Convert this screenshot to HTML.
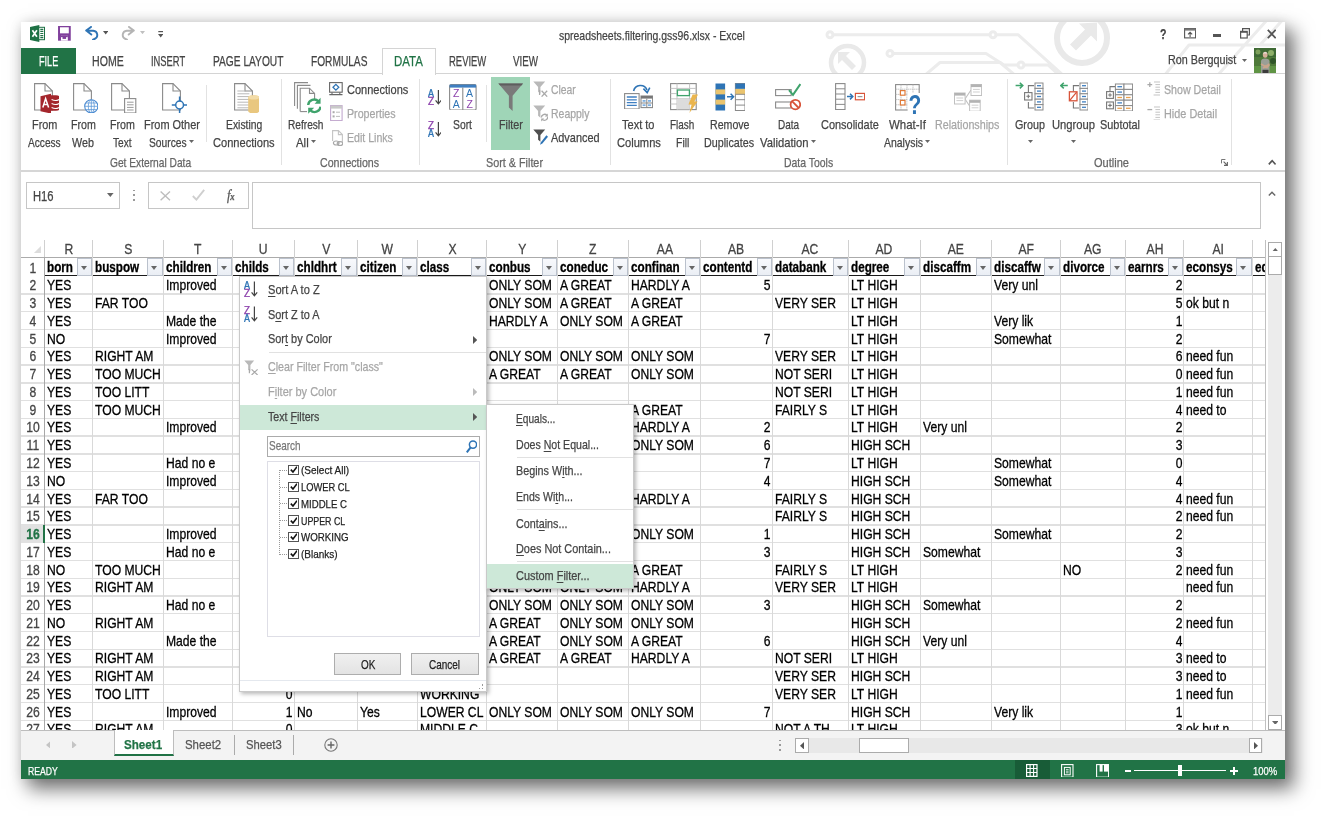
<!DOCTYPE html>
<html><head><meta charset="utf-8"><title>Excel</title>
<style>
*{box-sizing:border-box;margin:0;padding:0}
html,body{width:1326px;height:823px;overflow:hidden;background:#fff}
body{font-family:"Liberation Sans",sans-serif;font-size:13px;color:#444;position:relative}
.win{position:absolute;left:21px;top:22px;width:1264px;height:757px;background:#fff;box-shadow:8px 9px 18px 1px rgba(0,0,0,.55),0 0 12px rgba(0,0,0,.09)}
.pg{position:absolute;left:0;top:0;width:1326px;height:823px;will-change:transform}
.abs{position:absolute;display:block}
.t{position:absolute;white-space:nowrap;line-height:1;transform-origin:0 0;color:#444;font-size:13px;-webkit-text-stroke:.25px}
.t u{text-decoration:underline;text-underline-offset:1.5px;text-decoration-thickness:1px}
/* grid */
.grid{position:absolute;left:21px;top:240px;width:1244.5px;height:490.6px;overflow:hidden;color:#000;background:#fff}
.ch{position:absolute;top:2.2px;height:16px;line-height:1;text-align:center;color:#444;font-size:14.8px;transform:scaleX(.82);transform-origin:0 0}
.chl{position:absolute;top:0;width:1px;height:17px;background:#d0d0d0}
.hl2{position:absolute;left:0;width:1245px;height:1.2px;background:#ababab}
.rn{position:absolute;left:0;width:29px;text-align:center;color:#444;font-size:14.8px;line-height:1;transform:scaleX(.82);transform-origin:0 0}
.rnsel{position:absolute;left:0;width:24.1px;background:#e1e1e1;border-right:2px solid #217346;z-index:2}
.rn.sel{z-index:3}
.rn.sel{color:#217346;font-weight:bold}
.hl{position:absolute;left:0;width:1245px;height:1.4px;margin-top:-.2px;background:#e0e0e0}
.vl{position:absolute;top:17px;width:1px;height:474px;background:#d9d9d9}
.hb{position:absolute;top:34.7px;height:1.7px;background:#1a1a1a}
.hc{position:absolute;top:19.9px;height:16px;line-height:1;font-weight:bold;overflow:hidden;white-space:nowrap;font-size:14.8px;transform:scaleX(.79);transform-origin:0 0}
.fb{position:absolute;top:17.7px;width:15.4px;height:18.5px;border:1.2px solid #bac1cc;background:linear-gradient(#f8f9fc,#eaeef4)}
.fb i{position:absolute;left:3px;top:7.5px;width:0;height:0;border-left:3.5px solid transparent;border-right:3.5px solid transparent;border-top:4.3px solid #666}
.c{position:absolute;height:16px;line-height:1;white-space:nowrap;overflow:hidden;font-size:14.8px;transform:scaleX(.82);transform-origin:0 0}
.c.n{text-align:right}
.c,.hc,.rn,.ch{-webkit-text-stroke:.3px}
</style></head>
<body>
<div class="win"></div>
<div class="pg">
<svg class="abs" style="left:21px;top:22px" width="1264" height="52" viewBox="21 22 1264 52"><g fill="none" stroke="#ececec" stroke-width="3" stroke-linecap="round" stroke-linejoin="round">
<path d="M833,34.7 H990 M996,34.7 H1018 L1064,76"/>
<circle cx="830" cy="34.7" r="3"/><circle cx="993" cy="34.7" r="3"/>
<path d="M893,53.4 H986 L1004,65 H1018 M1024,65 H1048 L1060,76"/>
<circle cx="890" cy="53.4" r="3"/><circle cx="1021" cy="65" r="3"/>
<path d="M924,76 L940,62.5 H1000 L1016,76"/>
<path d="M1267,20 L1217,76 M1282.5,20 L1260,45 M1290,45 H1189 L1164,76"/>
</g>
<g fill="none" stroke="#e9e9e9" stroke-width="4.5">
<circle cx="847.5" cy="62.5" r="16.5"/>
<circle cx="1082" cy="38" r="25" stroke-width="6"/>
</g>
<g fill="#e9e9e9">
<path d="M838,52 h12 l-4,4 l10,10 l-4,4 l-10,-10 l-4,4 z"/>
<path d="M1097,22.5 v19 l-6,-6 l-15,15 l-6,-6 l15,-15 l-6,-6 z"/>
</g></svg>
<svg class="abs" style="left:30px;top:24.8px" width="15" height="17" viewBox="0 0 15 17"><rect x="8.5" y="2.3" width="6" height="12.4" fill="#fff" stroke="#1e7145" stroke-width="1"/>
<path d="M10.3,4.3h3M10.3,6.4h3M10.3,8.5h3M10.3,10.6h3M10.3,12.7h3" stroke="#1e7145" stroke-width="1.2"/>
<polygon points="0,2 9.3,0 9.3,17 0,15" fill="#1e7145"/>
<path d="M2.4,5.2 L6.9,11.8 M6.9,5.2 L2.4,11.8" stroke="#fff" stroke-width="1.7"/></svg>
<svg class="abs" style="left:58px;top:26px" width="12.8" height="14.7" viewBox="0 0 13 15"><path d="M0,0H13V15H0Z" fill="#80409c"/>
<rect x="2" y="1.3" width="9" height="6.2" fill="#fff"/>
<rect x="3" y="10" width="7" height="5" fill="#fff"/><rect x="4.6" y="10" width="3.6" height="3.2" fill="#80409c"/><rect x="3" y="10" width="7" height="1.4" fill="#80409c"/></svg>
<svg class="abs" style="left:84.5px;top:25.5px" width="14" height="14.5" viewBox="0 0 14 14.5"><path d="M1.2,4.6 L6,0.9 M1.2,4.6 L6.3,8.6 M1.6,4.7 H8.3 a4.3,4.3 0 0 1 1.2,8.3 L8,13.6" fill="none" stroke="#2e74b5" stroke-width="1.9" stroke-linecap="round" stroke-linejoin="round"/></svg>
<svg class="abs" style="left:103px;top:31.3px" width="5.4" height="3.4" viewBox="0 0 5.4 3.4"><polygon points="0,0 5.4,0 2.7,3.4" fill="#555"/></svg>
<svg class="abs" style="left:121.3px;top:25.5px" width="14" height="14.5" viewBox="0 0 14 14.5"><path d="M12.8,4.6 L8,0.9 M12.8,4.6 L7.7,8.6 M12.4,4.7 H5.7 a4.3,4.3 0 0 0 -1.2,8.3 L6,13.6" fill="none" stroke="#b4b4b4" stroke-width="1.9" stroke-linecap="round" stroke-linejoin="round"/></svg>
<svg class="abs" style="left:140.1px;top:31.3px" width="5" height="3.2" viewBox="0 0 5 3.2"><polygon points="0,0 5,0 2.5,3.2" fill="#c0c0c0"/></svg>
<svg class="abs" style="left:157.6px;top:31px" width="5.4" height="6.8" viewBox="0 0 5.4 6.8"><rect x="0.3" y="0" width="4.8" height="1.2" fill="#555"/><polygon points="0,3 5.4,3 2.7,6.5" fill="#555"/></svg>
<span class="t" style="left:559px;top:28.69px;font-size:13.6px;transform:scaleX(0.769);color:#444">spreadsheets.filtering.gss96.xlsx - Excel</span>
<span class="t" style="left:1160px;top:26.85px;font-size:14px;transform:scaleX(0.760);color:#444;font-weight:bold">?</span>
<svg class="abs" style="left:1184px;top:28.3px" width="12.2" height="10.5" viewBox="0 0 12.2 10.5"><rect x="0.6" y="0.6" width="11" height="9.3" fill="#fff" stroke="#555" stroke-width="1.1"/><rect x="0.6" y="0.6" width="11" height="2" fill="#777"/><path d="M6.1,9 V4.4 M4,6.4 L6.1,4.3 L8.2,6.4" fill="none" stroke="#555" stroke-width="1.1"/></svg>
<div class="abs" style="left:1213px;top:34.4px;width:8.2px;height:2.5px;background:#555"></div>
<svg class="abs" style="left:1239.5px;top:28px" width="10" height="10.8" viewBox="0 0 10 10.8"><path d="M2.6,3 V0.7 H9.4 V7 H7.2" fill="none" stroke="#555" stroke-width="1.2"/><rect x="0.6" y="3.4" width="6.6" height="6.6" fill="#fff" stroke="#555" stroke-width="1.2"/><rect x="0.6" y="3.4" width="6.6" height="1.4" fill="#555"/></svg>
<svg class="abs" style="left:1266.5px;top:28.5px" width="9.5" height="10" viewBox="0 0 9.5 10"><path d="M0.8,0.8 L8.7,9.2 M8.7,0.8 L0.8,9.2" stroke="#555" stroke-width="1.8"/></svg>
<span class="t" style="left:1167.7px;top:54.28px;font-size:12.9px;transform:scaleX(0.835);color:#444">Ron Bergquist</span>
<svg class="abs" style="left:1241.8px;top:58.8px" width="5" height="3" viewBox="0 0 5 3"><polygon points="0,0 5,0 2.5,3" fill="#666"/></svg>
<svg class="abs" style="left:1253.6px;top:48px" width="22.4" height="25" viewBox="0 0 22.4 25"><rect width="22.4" height="25" fill="#4f7a3a"/>
<rect x="0" y="0" width="22.4" height="9" fill="#3f6a35"/>
<circle cx="4" cy="4" r="2.5" fill="#7da05a"/><circle cx="17" cy="5" r="3" fill="#8fb06a"/><circle cx="19" cy="13" r="3" fill="#2f5528"/>
<rect x="0" y="18" width="22.4" height="7" fill="#5f9444"/>
<path d="M7,25 V13.5 Q7,10.5 11,10.5 Q15.5,10.5 15.5,13.5 V25 Z" fill="#9a9f96"/>
<path d="M7,16 L13,19.5 L15.5,16.5 M15.5,16 L9,20" stroke="#c9a58c" stroke-width="1.6" fill="none"/>
<rect x="8.5" y="21.8" width="6" height="3.2" fill="#3c3c3c"/>
<ellipse cx="11.2" cy="6.8" rx="2.4" ry="3" fill="#d7b09a"/><path d="M8.8,5.6 Q11.2,2.4 13.6,5.6" fill="#e8e4e0"/></svg>
<div class="abs" style="left:21px;top:73px;width:1264px;height:1px;background:#d4d4d4"></div>
<div class="abs" style="left:21px;top:48px;width:54.8px;height:26px;background:#217346"></div>
<span class="t" style="left:38.9px;top:54.92px;font-size:13.8px;transform:scaleX(0.662);color:#fff">FILE</span>
<span class="t" style="left:91.8px;top:54.92px;font-size:13.8px;transform:scaleX(0.768);color:#444">HOME</span>
<span class="t" style="left:150.8px;top:54.92px;font-size:13.8px;transform:scaleX(0.679);color:#444">INSERT</span>
<span class="t" style="left:212.8px;top:54.92px;font-size:13.8px;transform:scaleX(0.739);color:#444">PAGE LAYOUT</span>
<span class="t" style="left:310.8px;top:54.92px;font-size:13.8px;transform:scaleX(0.736);color:#444">FORMULAS</span>
<span class="t" style="left:449.2px;top:54.92px;font-size:13.8px;transform:scaleX(0.685);color:#444">REVIEW</span>
<span class="t" style="left:513px;top:54.92px;font-size:13.8px;transform:scaleX(0.712);color:#444">VIEW</span>
<div class="abs" style="left:382.3px;top:48px;width:53.4px;height:26.5px;background:#fff;border:1px solid #d4d4d4;border-bottom:none"></div>
<span class="t" style="left:393.6px;top:54.92px;font-size:13.8px;transform:scaleX(0.831);color:#217346">DATA</span>
<div class="abs" style="left:21px;top:170.2px;width:1264px;height:1.6px;background:#d6d6d6"></div>
<div class="abs" style="left:280.9px;top:78.5px;width:1px;height:86.5px;background:#e2e2e2"></div>
<div class="abs" style="left:418.9px;top:78.5px;width:1px;height:86.5px;background:#e2e2e2"></div>
<div class="abs" style="left:609.9px;top:78.5px;width:1px;height:86.5px;background:#e2e2e2"></div>
<div class="abs" style="left:1006.9px;top:78.5px;width:1px;height:86.5px;background:#e2e2e2"></div>
<div class="abs" style="left:1230.9px;top:78.5px;width:1px;height:86.5px;background:#e2e2e2"></div>
<div class="abs" style="left:205.7px;top:85px;width:1px;height:57px;background:#e2e2e2"></div>
<div class="abs" style="left:486px;top:85px;width:1px;height:57px;background:#e2e2e2"></div>
<svg class="abs" style="left:33.7px;top:82.7px" width="25.5" height="30.8" viewBox="0 0 25.5 30.8"><path d="M0.6,0.6 H11 L18.4,8 V27 H0.6 Z" fill="#fff" stroke="#8a8a8a" stroke-width="1.1"/><path d="M11,0.6 V8 H18.4" fill="none" stroke="#8a8a8a" stroke-width="1.1"/>
<path d="M6.5,13.2 L17,10.8 V30.6 L6.5,28.2 Z" fill="#a4262c"/>
<path d="M17,12.2 h5 a3.3,1.6 0 0 1 3.3,1.6 v12.4 a3.3,1.6 0 0 1 -3.3,1.6 h-5 z" fill="#a4262c"/>
<path d="M17.6,16.5 q4,2 7.4,0 M17.6,20.5 q4,2 7.4,0 M17.6,24.5 q4,2 7.4,0" stroke="#fff" stroke-width="1.1" fill="none"/>
<path d="M8.8,24.6 L11.6,15.6 L14.6,24.6 M9.8,21.6 h3.8" stroke="#fff" stroke-width="1.5" fill="none"/></svg>
<span class="t" style="left:31.6px;top:118.39px;font-size:13.6px;transform:scaleX(0.800)">From</span>
<span class="t" style="left:27.8px;top:135.59px;font-size:13.6px;transform:scaleX(0.746)">Access</span>
<svg class="abs" style="left:72.8px;top:82.7px" width="25.5" height="30.8" viewBox="0 0 25.5 30.8"><path d="M0.6,0.6 H11 L18.4,8 V27 H0.6 Z" fill="#fff" stroke="#8a8a8a" stroke-width="1.1"/><path d="M11,0.6 V8 H18.4" fill="none" stroke="#8a8a8a" stroke-width="1.1"/>
<circle cx="18.3" cy="23.3" r="6.6" fill="#fff" stroke="#4a8ad0" stroke-width="1.1"/>
<ellipse cx="18.3" cy="23.3" rx="3" ry="6.6" fill="none" stroke="#5b97d8" stroke-width="0.8"/>
<path d="M11.7,23.3 h13.2 M18.3,16.7 v13.2 M12.8,20 h11 M12.8,26.6 h11" stroke="#5b97d8" stroke-width="0.8" fill="none"/></svg>
<span class="t" style="left:70.7px;top:118.39px;font-size:13.6px;transform:scaleX(0.785)">From</span>
<span class="t" style="left:72px;top:135.59px;font-size:13.6px;transform:scaleX(0.790)">Web</span>
<svg class="abs" style="left:111.4px;top:82.7px" width="25.6" height="30.8" viewBox="0 0 25.6 30.8"><path d="M0.6,0.6 H11 L18.4,8 V27 H0.6 Z" fill="#fff" stroke="#8a8a8a" stroke-width="1.1"/><path d="M11,0.6 V8 H18.4" fill="none" stroke="#8a8a8a" stroke-width="1.1"/>
<rect x="13.6" y="15.6" width="11.2" height="14.4" fill="#fff" stroke="#8a8a8a" stroke-width="1.1"/>
<path d="M16,19.2 h6.6 M16,21.8 h6.6 M16,24.4 h6.6 M16,27 h6.6" stroke="#9a9a9a" stroke-width="1"/></svg>
<span class="t" style="left:109.7px;top:118.39px;font-size:13.6px;transform:scaleX(0.785)">From</span>
<span class="t" style="left:112.9px;top:135.59px;font-size:13.6px;transform:scaleX(0.746)">Text</span>
<svg class="abs" style="left:161.9px;top:82.7px" width="25.5" height="30.8" viewBox="0 0 25.5 30.8"><path d="M0.6,0.6 H11 L18.4,8 V27 H0.6 Z" fill="#fff" stroke="#8a8a8a" stroke-width="1.1"/><path d="M11,0.6 V8 H18.4" fill="none" stroke="#8a8a8a" stroke-width="1.1"/>
<circle cx="17.6" cy="22" r="3.9" fill="#fff" stroke="#2e74b5" stroke-width="1.5"/>
<path d="M17.6,13.6 v4.6 M17.6,25.8 v4.6 M9.8,22 h4 M21.5,22 h4" stroke="#2e74b5" stroke-width="1.5"/></svg>
<span class="t" style="left:143.5px;top:118.39px;font-size:13.6px;transform:scaleX(0.805)">From Other</span>
<span class="t" style="left:148.8px;top:135.59px;font-size:13.6px;transform:scaleX(0.754)">Sources</span>
<svg class="abs" style="left:189px;top:139.9px" width="5" height="3" viewBox="0 0 5 3"><polygon points="0,0 5,0 2.5,3" fill="#666"/></svg>
<svg class="abs" style="left:233.7px;top:82.7px" width="25.6" height="30.8" viewBox="0 0 25.6 30.8"><path d="M0.6,0.6 H11 L18.4,8 V27 H0.6 Z" fill="#fff" stroke="#8a8a8a" stroke-width="1.1"/><path d="M11,0.6 V8 H18.4" fill="none" stroke="#8a8a8a" stroke-width="1.1"/>
<path d="M3.4,8 h8.5 M3.4,10.8 h12 M3.4,13.6 h12 M3.4,16.4 h12 M3.4,19.2 h12 M3.4,22 h12 M3.4,24.8 h12" stroke="#b8b8b8" stroke-width="1"/>
<path d="M14.2,14.4 a5.5,2.2 0 0 1 11,0 v13.8 a5.5,2.2 0 0 1 -11,0 z" fill="#e9c77f"/><ellipse cx="19.7" cy="14.4" rx="5.5" ry="2.2" fill="#f3dca8"/></svg>
<span class="t" style="left:225.9px;top:118.39px;font-size:13.6px;transform:scaleX(0.762)">Existing</span>
<span class="t" style="left:212.8px;top:135.59px;font-size:13.6px;transform:scaleX(0.815)">Connections</span>
<span class="t" style="left:110.4px;top:156.6px;font-size:12.4px;transform:scaleX(0.823);color:#666">Get External Data</span>
<svg class="abs" style="left:293.7px;top:81.6px" width="27.7" height="32.9" viewBox="0 0 27.7 32.9">
<path d="M0.6,24 V0.6 H14" fill="none" stroke="#8a8a8a" stroke-width="1.1"/>
<path d="M3.4,26.8 V3.4 H16.5" fill="none" stroke="#8a8a8a" stroke-width="1.1"/>
<path d="M6.2,29.6 V6.2 H15.5 L20.6,11.4 V17" fill="#fff" stroke="#8a8a8a" stroke-width="1.1"/><path d="M15.5,6.2 V11.4 H20.6" fill="none" stroke="#8a8a8a" stroke-width="1.1"/>
<path d="M6.2,29.6 H13" stroke="#8a8a8a" stroke-width="1.1"/>
<g fill="none" stroke="#3fa36c" stroke-width="2.4"><path d="M14.2,23 a6,6 0 0 1 10.3,-3.6"/><path d="M26.6,24.6 a6,6 0 0 1 -10.3,3.6"/></g>
<path d="M26.6,15.8 v6 h-6 z" fill="#3fa36c"/><path d="M14.2,31.8 v-6 h6 z" fill="#3fa36c"/></svg>
<span class="t" style="left:287.8px;top:118.39px;font-size:13.6px;transform:scaleX(0.745)">Refresh</span>
<span class="t" style="left:295.8px;top:135.59px;font-size:13.6px;transform:scaleX(0.840)">All</span>
<svg class="abs" style="left:311.3px;top:139.9px" width="5" height="3" viewBox="0 0 5 3"><polygon points="0,0 5,0 2.5,3" fill="#666"/></svg>
<svg class="abs" style="left:329.2px;top:81.6px" width="13.8" height="14" viewBox="0 0 13.8 14"><rect x="0.6" y="0.6" width="12.6" height="9.6" fill="#fff" stroke="#666" stroke-width="1.1"/>
<path d="M0.3,12.6 h13.2 M3,12.6 v-2.2 M10.8,12.6 v-2.2" stroke="#666" stroke-width="1.1" fill="none"/>
<path d="M6.9,2.4 L9.8,5.3 L6.9,8.2 L4,5.3 Z" fill="#fff" stroke="#2e74b5" stroke-width="1.3"/></svg>
<span class="t" style="left:347.1px;top:82.99px;font-size:13.6px;transform:scaleX(0.811)">Connections</span>
<svg class="abs" style="left:330.3px;top:104.8px" width="12.7" height="16.2" viewBox="0 0 12.7 16.2"><rect x="0.6" y="0.6" width="11.5" height="15" fill="#fff" stroke="#c3a9cf" stroke-width="1.1"/><rect x="0.6" y="0.6" width="11.5" height="3" fill="#c9c9c9"/>
<rect x="2.6" y="6.2" width="2" height="2" fill="#aaa"/><rect x="2.6" y="10.4" width="2" height="2" fill="#aaa"/><path d="M6,7.2 h4 M6,11.4 h4" stroke="#bbb" stroke-width="1"/></svg>
<span class="t" style="left:347.1px;top:106.89px;font-size:13.6px;transform:scaleX(0.784);color:#a6a6a6">Properties</span>
<svg class="abs" style="left:331.7px;top:129.5px" width="11.3" height="16.5" viewBox="0 0 11.3 16.5"><path d="M0.6,11 V0.6 H6.4 L10.4,4.6 V12" fill="#fff" stroke="#c4c4c4" stroke-width="1.1"/><path d="M6.4,0.6 V4.6 H10.4" fill="none" stroke="#c4c4c4" stroke-width="1.1"/>
<ellipse cx="4.2" cy="13" rx="2.8" ry="2" fill="none" stroke="#a8a8a8" stroke-width="1.2"/><ellipse cx="8" cy="13.6" rx="2.8" ry="2" fill="none" stroke="#a8a8a8" stroke-width="1.2"/></svg>
<span class="t" style="left:347.1px;top:131.19px;font-size:13.6px;transform:scaleX(0.778);color:#a6a6a6">Edit Links</span>
<span class="t" style="left:320.1px;top:156.6px;font-size:12.4px;transform:scaleX(0.857);color:#666">Connections</span>
<svg class="abs" style="left:427.6px;top:89.2px" width="13.4" height="16" viewBox="0 0 13.4 16"><text x="0" y="7.6" font-family="Liberation Sans, sans-serif" font-size="10.6" fill="#2e74b5" stroke="#2e74b5" stroke-width="0.35" textLength="6" lengthAdjust="spacingAndGlyphs">A</text>
<text x="0" y="15.7" font-family="Liberation Sans, sans-serif" font-size="10.6" fill="#8e44ad" stroke="#8e44ad" stroke-width="0.35" textLength="6" lengthAdjust="spacingAndGlyphs">Z</text>
<path d="M10.4,1 V14.6 M7.6,11.4 L10.4,14.8 L13.2,11.4" fill="none" stroke="#444" stroke-width="1.2"/></svg>
<svg class="abs" style="left:427.6px;top:121px" width="13.4" height="16" viewBox="0 0 13.4 16"><text x="0" y="7.6" font-family="Liberation Sans, sans-serif" font-size="10.6" fill="#8e44ad" stroke="#8e44ad" stroke-width="0.35" textLength="6" lengthAdjust="spacingAndGlyphs">Z</text>
<text x="0" y="15.7" font-family="Liberation Sans, sans-serif" font-size="10.6" fill="#2e74b5" stroke="#2e74b5" stroke-width="0.35" textLength="6" lengthAdjust="spacingAndGlyphs">A</text>
<path d="M10.4,1 V14.6 M7.6,11.4 L10.4,14.8 L13.2,11.4" fill="none" stroke="#444" stroke-width="1.2"/></svg>
<svg class="abs" style="left:448.9px;top:83.7px" width="27.7" height="26.6" viewBox="0 0 27.7 26.6"><rect x="0.6" y="0.6" width="26.5" height="25.4" rx="1.5" fill="#fff" stroke="#8a8a8a" stroke-width="1.1"/>
<rect x="0.6" y="0.6" width="26.5" height="3" fill="#3f7fc1"/><path d="M13.8,3.6 V26" stroke="#8a8a8a" stroke-width="1.1"/>
<g font-family="Liberation Sans, sans-serif" font-size="10.5" text-anchor="middle">
<text x="7.2" y="13.4" fill="#8e44ad">Z</text><text x="7.2" y="23.6" fill="#2e74b5">A</text><text x="20.6" y="13.4" fill="#2e74b5">A</text><text x="20.6" y="23.6" fill="#8e44ad">Z</text></g></svg>
<span class="t" style="left:453.1px;top:118.39px;font-size:13.6px;transform:scaleX(0.762)">Sort</span>
<div class="abs" style="left:491.1px;top:77.4px;width:39.1px;height:72.4px;background:#9fd5b7"></div>
<svg class="abs" style="left:497.5px;top:82.7px" width="25.5" height="28.7" viewBox="0 0 25.5 28.7"><path d="M0.4,0.5 H25.1 L14.6,12.8 V28 L10.9,24.6 V12.8 Z" fill="#7a7a7a"/><path d="M0.4,0.5 H25.1 L23.4,2.6 H2.1 Z" fill="#5e5e5e"/></svg>
<span class="t" style="left:498.5px;top:118.39px;font-size:13.6px;transform:scaleX(0.791)">Filter</span>
<svg class="abs" style="left:532.7px;top:80.6px" width="15.3" height="16.6" viewBox="0 0 15.3 16.6"><path d="M0.3,0.4 H12.2 L7.4,6 V12.8 L5.1,10.8 V6 Z" fill="#b9b9b9"/><path d="M8.6,9.8 L14.2,15.6 M14.2,9.8 L8.6,15.6 M6.6,9 v5" stroke="#a9a9a9" stroke-width="1.3" fill="none"/></svg>
<span class="t" style="left:550.6px;top:82.99px;font-size:13.6px;transform:scaleX(0.760);color:#a6a6a6">Clear</span>
<svg class="abs" style="left:532.7px;top:105.2px" width="15.3" height="16.4" viewBox="0 0 15.3 16.4"><path d="M0.3,0.4 H12.2 L7.4,6 V12.8 L5.1,10.8 V6 Z" fill="#b9b9b9"/><path d="M8.4,12.6 a3.2,3.2 0 0 1 5.6,-2.2 M14.6,11.6 a3.2,3.2 0 0 1 -5.6,2.6" stroke="#a9a9a9" stroke-width="1.3" fill="none"/><path d="M14.8,8.4 v3 h-3 z M8.2,16.4 v-3 h3 z" fill="#a9a9a9"/></svg>
<span class="t" style="left:550.6px;top:106.89px;font-size:13.6px;transform:scaleX(0.770);color:#a6a6a6">Reapply</span>
<svg class="abs" style="left:532.7px;top:129.3px" width="15.3" height="16.3" viewBox="0 0 15.3 16.3"><path d="M0.3,0.4 H12.2 L7.4,6 V12.8 L5.1,10.8 V6 Z" fill="#505050"/><path d="M13.4,6.2 L15,7.8 L9.4,14.6 L7,15.8 L7.9,13.2 Z" fill="#2e74b5"/></svg>
<span class="t" style="left:550.6px;top:131.19px;font-size:13.6px;transform:scaleX(0.803)">Advanced</span>
<span class="t" style="left:485.9px;top:156.6px;font-size:12.4px;transform:scaleX(0.871);color:#666">Sort &amp; Filter</span>
<svg class="abs" style="left:623.5px;top:82.5px" width="29.3" height="26.7" viewBox="0 0 29.3 26.7"><rect x="0.6" y="10.6" width="14.5" height="15.4" fill="#fff" stroke="#8a8a8a" stroke-width="1.1"/>
<path d="M2.8,14 h10 M2.8,16.8 h10 M2.8,19.6 h10 M2.8,22.4 h10" stroke="#3f7fc1" stroke-width="1.3"/>
<rect x="17" y="13" width="11.6" height="11.6" fill="#fff" stroke="#8a8a8a" stroke-width="1.1"/><rect x="17" y="13" width="11.6" height="2.6" fill="#777"/>
<path d="M22.8,15.6 V24.6 M17,20 h11.6" stroke="#8a8a8a" stroke-width="1"/><rect x="18.6" y="17" width="3" height="1.8" fill="#7fb0e0"/><rect x="24" y="17" width="3" height="1.8" fill="#7fb0e0"/><rect x="18.6" y="21.3" width="3" height="1.8" fill="#7fb0e0"/><rect x="24" y="21.3" width="3" height="1.8" fill="#7fb0e0"/>
<path d="M9.6,8 a7,7 0 0 1 13.4,-1" fill="none" stroke="#2e74b5" stroke-width="1.6"/><path d="M19.4,5.6 L23.2,9.6 L25.8,4.6" fill="none" stroke="#2e74b5" stroke-width="1.6"/></svg>
<span class="t" style="left:622px;top:118.39px;font-size:13.6px;transform:scaleX(0.811)">Text to</span>
<span class="t" style="left:616.5px;top:135.59px;font-size:13.6px;transform:scaleX(0.818)">Columns</span>
<svg class="abs" style="left:669.5px;top:83px" width="28.5" height="30.5" viewBox="0 0 28.5 30.5"><rect x="0.6" y="0.6" width="25.6" height="26" fill="#fff" stroke="#8a8a8a" stroke-width="1.1"/>
<path d="M0.6,5.4 h25.6 M0.6,10.6 h25.6 M0.6,15.8 h25.6 M0.6,21 h25.6 M7,0.6 v26 M19.6,0.6 v26" stroke="#c4c4c4" stroke-width="1"/>
<rect x="7" y="16" width="12.6" height="10.4" fill="#dcdcdc"/>
<rect x="7.4" y="7" width="12" height="5.6" fill="#fff" stroke="#3fa36c" stroke-width="1.3"/>
<path d="M22.6,11.4 L28,11.4 L24.4,18.6 L27.6,18.6 L19.4,30 L21.6,21.6 L18.4,21.6 Z" fill="#eab54e"/></svg>
<span class="t" style="left:669.9px;top:118.39px;font-size:13.6px;transform:scaleX(0.731)">Flash</span>
<span class="t" style="left:675.6px;top:135.59px;font-size:13.6px;transform:scaleX(0.771)">Fill</span>
<svg class="abs" style="left:714.7px;top:82.7px" width="30.5" height="28" viewBox="0 0 30.5 28"><rect x="0.5" y="0.5" width="9.6" height="27" fill="#2e74b5"/>
<rect x="0.5" y="6.4" width="9.6" height="5" fill="#eac46e"/><rect x="0.5" y="16.6" width="9.6" height="5" fill="#eac46e"/>
<path d="M12,13.8 h6.2 M15.6,10.8 L18.6,13.8 L15.6,16.8" fill="none" stroke="#2e74b5" stroke-width="1.5"/>
<rect x="20.4" y="0.5" width="9.6" height="27" fill="#fff" stroke="#8a8a8a" stroke-width="1"/><rect x="20.4" y="0.5" width="9.6" height="5.4" fill="#2e74b5"/><rect x="20.4" y="5.9" width="9.6" height="5.4" fill="#eac46e"/>
<path d="M20.4,11.3 h9.6 M20.4,16.7 h9.6 M20.4,22.1 h9.6" stroke="#8a8a8a" stroke-width="1"/></svg>
<span class="t" style="left:709.6px;top:118.39px;font-size:13.6px;transform:scaleX(0.780)">Remove</span>
<span class="t" style="left:704.3px;top:135.59px;font-size:13.6px;transform:scaleX(0.789)">Duplicates</span>
<svg class="abs" style="left:774.8px;top:83.2px" width="26.2" height="27.6" viewBox="0 0 26.2 27.6"><rect x="0.6" y="6.6" width="15.6" height="6" fill="#fff" stroke="#8a8a8a" stroke-width="1.1"/><rect x="0.6" y="19" width="15.6" height="6" fill="#fff" stroke="#8a8a8a" stroke-width="1.1"/>
<path d="M14,7.2 L18,11.8 L25.4,1" fill="none" stroke="#3fa36c" stroke-width="2"/>
<circle cx="20.4" cy="21.6" r="4.8" fill="#fff" stroke="#d8543a" stroke-width="1.8"/><path d="M17,18.2 L23.8,25" stroke="#d8543a" stroke-width="1.8"/></svg>
<span class="t" style="left:777.6px;top:118.39px;font-size:13.6px;transform:scaleX(0.734)">Data</span>
<span class="t" style="left:760.1px;top:135.59px;font-size:13.6px;transform:scaleX(0.826)">Validation</span>
<svg class="abs" style="left:810.8px;top:139.9px" width="5" height="3" viewBox="0 0 5 3"><polygon points="0,0 5,0 2.5,3" fill="#666"/></svg>
<svg class="abs" style="left:835px;top:82.7px" width="30.3" height="27.2" viewBox="0 0 30.3 27.2"><rect x="0.6" y="0.6" width="9.4" height="26" fill="#fff" stroke="#8a8a8a" stroke-width="1.1"/><path d="M0.6,5.8 h9.4 M0.6,11 h9.4 M0.6,16.2 h9.4 M0.6,21.4 h9.4" stroke="#8a8a8a" stroke-width="1"/>
<path d="M12,13.6 h5.6 M15,10.8 L17.8,13.6 L15,16.4" fill="none" stroke="#2e74b5" stroke-width="1.5"/>
<rect x="20.4" y="10.4" width="9.2" height="6.4" fill="#fff" stroke="#d8543a" stroke-width="1.2"/><path d="M22.6,13.6 h4.8" stroke="#999" stroke-width="1.2"/></svg>
<span class="t" style="left:820.9px;top:118.39px;font-size:13.6px;transform:scaleX(0.805)">Consolidate</span>
<svg class="abs" style="left:895.2px;top:83.7px" width="26.8" height="30.1" viewBox="0 0 26.8 30.1"><rect x="0.6" y="0.6" width="23.6" height="25.4" fill="#fff" stroke="#8a8a8a" stroke-width="1.1"/>
<path d="M0.6,5.2 h23.6 M6,0.6 v25.4 M12,0.6 v25.4 M18,0.6 v25.4 M0.6,10.4 h23.6 M0.6,15.6 h23.6 M0.6,20.8 h23.6" stroke="#b0b0b0" stroke-width="0.9" stroke-dasharray="1.2 0.8"/>
<rect x="5.4" y="6.6" width="4.6" height="4.6" fill="#fff" stroke="#e07b39" stroke-width="1.2"/><rect x="5.4" y="16.4" width="4.6" height="4.6" fill="#fff" stroke="#e07b39" stroke-width="1.2"/>
<rect x="12.6" y="9" width="14.2" height="21.1" fill="#fff"/>
<text x="13.6" y="29.6" font-family="Liberation Sans, sans-serif" font-weight="bold" font-size="27" fill="#2e74b5" textLength="12.8" lengthAdjust="spacingAndGlyphs">?</text></svg>
<span class="t" style="left:888.9px;top:118.39px;font-size:13.6px;transform:scaleX(0.842)">What-If</span>
<span class="t" style="left:883.6px;top:135.59px;font-size:13.6px;transform:scaleX(0.770)">Analysis</span>
<svg class="abs" style="left:925.4px;top:139.9px" width="5" height="3" viewBox="0 0 5 3"><polygon points="0,0 5,0 2.5,3" fill="#666"/></svg>
<svg class="abs" style="left:953.7px;top:83.7px" width="28.3" height="27.7" viewBox="0 0 28.3 27.7"><path d="M11,15 L17,6 M11,15 L15.6,22" stroke="#c0c0c0" stroke-width="1.1" fill="none"/>
<g fill="#fff" stroke="#c0c0c0" stroke-width="1"><rect x="0.5" y="9" width="10.6" height="11"/><rect x="17" y="0.5" width="10.6" height="11"/><rect x="15.6" y="16.2" width="10.6" height="11"/></g>
<g fill="#b3b3b3"><rect x="0.5" y="9" width="10.6" height="2.6"/><rect x="17" y="0.5" width="10.6" height="2.6"/><rect x="15.6" y="16.2" width="10.6" height="2.6"/></g>
<path d="M2.4,14 h6.8 M2.4,16.6 h6.8 M19,5.4 h6.8 M19,8 h6.8 M17.6,21.2 h6.8 M17.6,23.8 h6.8" stroke="#d0d0d0" stroke-width="1"/></svg>
<span class="t" style="left:935.3px;top:118.39px;font-size:13.6px;transform:scaleX(0.789);color:#a6a6a6">Relationships</span>
<span class="t" style="left:783.7px;top:156.6px;font-size:12.4px;transform:scaleX(0.843);color:#666">Data Tools</span>
<svg class="abs" style="left:1015.3px;top:82px" width="28.7" height="29.3" viewBox="0 0 28.7 29.3"><rect x="20" y="1.0" width="8" height="5.4" fill="#fff" stroke="#8a8a8a" stroke-width="1"/><path d="M22,3.7 h4" stroke="#3f7fc1" stroke-width="1.3"/><rect x="20" y="6.4" width="8" height="5.4" fill="#fff" stroke="#8a8a8a" stroke-width="1"/><path d="M22,9.100000000000001 h4" stroke="#3f7fc1" stroke-width="1.3"/><rect x="20" y="11.8" width="8" height="5.4" fill="#fff" stroke="#8a8a8a" stroke-width="1"/><path d="M22,14.5 h4" stroke="#3f7fc1" stroke-width="1.3"/><rect x="20" y="17.200000000000003" width="8" height="5.4" fill="#fff" stroke="#8a8a8a" stroke-width="1"/><path d="M22,19.900000000000002 h4" stroke="#3f7fc1" stroke-width="1.3"/><rect x="20" y="22.6" width="8" height="5.4" fill="#fff" stroke="#8a8a8a" stroke-width="1"/><path d="M22,25.3 h4" stroke="#3f7fc1" stroke-width="1.3"/><path d="M0.6,3.6 h7 M4.8,0.8 L7.8,3.6 L4.8,6.4" fill="none" stroke="#3fa36c" stroke-width="1.5"/>
<path d="M19,3.6 h-5.6 v7 M13.4,20 v6 h5.6" fill="none" stroke="#777" stroke-width="1.1"/>
<rect x="9.6" y="10.6" width="7.4" height="7.4" fill="#fff" stroke="#777" stroke-width="1.1"/><path d="M11.4,14.3 h3.8 M13.3,12.4 v3.8" stroke="#777" stroke-width="1.1"/></svg>
<span class="t" style="left:1014.9px;top:118.39px;font-size:13.6px;transform:scaleX(0.791)">Group</span>
<svg class="abs" style="left:1027.5px;top:139.9px" width="5" height="3" viewBox="0 0 5 3"><polygon points="0,0 5,0 2.5,3" fill="#666"/></svg>
<svg class="abs" style="left:1059.5px;top:82px" width="28.7" height="29.3" viewBox="0 0 28.7 29.3"><rect x="20" y="1.0" width="8" height="5.4" fill="#fff" stroke="#8a8a8a" stroke-width="1"/><path d="M22,3.7 h4" stroke="#3f7fc1" stroke-width="1.3"/><rect x="20" y="6.4" width="8" height="5.4" fill="#fff" stroke="#8a8a8a" stroke-width="1"/><path d="M22,9.100000000000001 h4" stroke="#3f7fc1" stroke-width="1.3"/><rect x="20" y="11.8" width="8" height="5.4" fill="#fff" stroke="#8a8a8a" stroke-width="1"/><path d="M22,14.5 h4" stroke="#3f7fc1" stroke-width="1.3"/><rect x="20" y="17.200000000000003" width="8" height="5.4" fill="#fff" stroke="#8a8a8a" stroke-width="1"/><path d="M22,19.900000000000002 h4" stroke="#3f7fc1" stroke-width="1.3"/><rect x="20" y="22.6" width="8" height="5.4" fill="#fff" stroke="#8a8a8a" stroke-width="1"/><path d="M22,25.3 h4" stroke="#3f7fc1" stroke-width="1.3"/><path d="M0.8,3.6 h7 M3.8,0.8 L0.8,3.6 L3.8,6.4" fill="none" stroke="#3fa36c" stroke-width="1.5"/>
<path d="M19,3.6 h-5.6 v6 M13.4,20 v6 h5.6" fill="none" stroke="#777" stroke-width="1.1"/>
<rect x="9.4" y="9.8" width="7.6" height="9" fill="#fff" stroke="#d8543a" stroke-width="1.3"/><path d="M16.6,10.2 L9.8,18.4" stroke="#d8543a" stroke-width="1.3"/></svg>
<span class="t" style="left:1052px;top:118.39px;font-size:13.6px;transform:scaleX(0.826)">Ungroup</span>
<svg class="abs" style="left:1071px;top:139.9px" width="5" height="3" viewBox="0 0 5 3"><polygon points="0,0 5,0 2.5,3" fill="#666"/></svg>
<svg class="abs" style="left:1106.1px;top:83.2px" width="27.2" height="28.2" viewBox="0 0 27.2 28.2"><rect x="9.4" y="1.0" width="8.6" height="5.4" fill="#fff" stroke="#8a8a8a" stroke-width="1"/><rect x="18" y="1.0" width="8.6" height="5.4" fill="#fff" stroke="#8a8a8a" stroke-width="1"/><rect x="9.4" y="6.4" width="8.6" height="5.4" fill="#fff" stroke="#8a8a8a" stroke-width="1"/><rect x="18" y="6.4" width="8.6" height="5.4" fill="#fff" stroke="#8a8a8a" stroke-width="1"/><rect x="9.4" y="11.8" width="8.6" height="5.4" fill="#fff" stroke="#8a8a8a" stroke-width="1"/><rect x="18" y="11.8" width="8.6" height="5.4" fill="#fff" stroke="#8a8a8a" stroke-width="1"/><rect x="9.4" y="17.200000000000003" width="8.6" height="5.4" fill="#fff" stroke="#8a8a8a" stroke-width="1"/><rect x="18" y="17.200000000000003" width="8.6" height="5.4" fill="#fff" stroke="#8a8a8a" stroke-width="1"/><rect x="9.4" y="22.6" width="8.6" height="5.4" fill="#fff" stroke="#8a8a8a" stroke-width="1"/><rect x="18" y="22.6" width="8.6" height="5.4" fill="#fff" stroke="#8a8a8a" stroke-width="1"/><path d="M11.4,3.7 h4.6" stroke="#3f7fc1" stroke-width="1.3"/><path d="M11.4,9.100000000000001 h4.6" stroke="#3f7fc1" stroke-width="1.3"/><path d="M11.4,14.5 h4.6" stroke="#eaa14e" stroke-width="1.3"/><path d="M11.4,19.900000000000002 h4.6" stroke="#3f7fc1" stroke-width="1.3"/><path d="M11.4,25.3 h4.6" stroke="#eaa14e" stroke-width="1.3"/><path d="M20,14.5 h4.6" stroke="#eaa14e" stroke-width="1.3"/><path d="M20,25.3 h4.6" stroke="#eaa14e" stroke-width="1.3"/><path d="M9,3.6 h-5 v5" fill="none" stroke="#777" stroke-width="1.1"/>
<rect x="0.6" y="8.6" width="6.8" height="6.8" fill="#fff" stroke="#777" stroke-width="1.1"/><path d="M2.2,12 h3.6 M4,10.2 v3.6" stroke="#777" stroke-width="1.1"/>
<rect x="0.6" y="19" width="6.8" height="6.8" fill="#fff" stroke="#777" stroke-width="1.1"/><path d="M2.2,22.4 h3.6 M4,20.6 v3.6" stroke="#777" stroke-width="1.1"/></svg>
<span class="t" style="left:1100px;top:118.39px;font-size:13.6px;transform:scaleX(0.802)">Subtotal</span>
<svg class="abs" style="left:1147px;top:81.4px" width="13.3" height="14.6" viewBox="0 0 13.3 14.6"><path d="M0.4,3.6 h4.8 M2.8,1.2 v4.8" stroke="#a9a9a9" stroke-width="1.3"/><path d="M7,1 h6 M8.4,3.6 h4.6 M8.4,6.2 h4.6 M8.4,8.8 h4.6 M8.4,11.4 h4.6 M6.6,14 h6.4" stroke="#c4c4c4" stroke-width="1"/></svg>
<span class="t" style="left:1164px;top:82.99px;font-size:13.6px;transform:scaleX(0.784);color:#a6a6a6">Show Detail</span>
<svg class="abs" style="left:1147px;top:105.5px" width="13.3" height="14.6" viewBox="0 0 13.3 14.6"><path d="M0.4,3.6 h4.8" stroke="#a9a9a9" stroke-width="1.3"/><path d="M7,1 h6 M8.4,3.6 h4.6 M8.4,6.2 h4.6 M8.4,8.8 h4.6 M8.4,11.4 h4.6 M6.6,14 h6.4" stroke="#c4c4c4" stroke-width="1"/></svg>
<span class="t" style="left:1164px;top:106.99px;font-size:13.6px;transform:scaleX(0.800);color:#a6a6a6">Hide Detail</span>
<span class="t" style="left:1094px;top:156.6px;font-size:12.4px;transform:scaleX(0.891);color:#666">Outline</span>
<svg class="abs" style="left:1220.8px;top:159.2px" width="7" height="7" viewBox="0 0 7 7"><path d="M0.5,4.4 V0.5 H4.4" fill="none" stroke="#777" stroke-width="1"/><path d="M2.6,2.6 L6,6 M6.4,3 V6.4 H3" fill="none" stroke="#666" stroke-width="1.1"/></svg>
<svg class="abs" style="left:1267.6px;top:159px" width="8.4" height="6.4" viewBox="0 0 8.4 6.4"><path d="M0.8,5.4 L4.2,1.6 L7.6,5.4" fill="none" stroke="#555" stroke-width="1.6"/></svg>
<div class="abs" style="left:25.9px;top:182.2px;width:93.7px;height:26.4px;border:1px solid #c6c6c6;background:#fff"></div>
<span class="t" style="left:32.7px;top:189.92px;font-size:13.8px;transform:scaleX(0.814);color:#444">H16</span>
<svg class="abs" style="left:107px;top:192.6px" width="6.6" height="4" viewBox="0 0 6.6 4"><polygon points="0,0 6.6,0 3.3,4" fill="#666"/></svg>
<div class="abs" style="left:133.3px;top:189.7px;width:1.7px;height:1.8px;background:#9a9a9a"></div>
<div class="abs" style="left:133.3px;top:194.4px;width:1.7px;height:1.8px;background:#9a9a9a"></div>
<div class="abs" style="left:133.3px;top:199.1px;width:1.7px;height:1.8px;background:#9a9a9a"></div>
<div class="abs" style="left:148px;top:182.2px;width:101.4px;height:26.4px;border:1px solid #c6c6c6;background:#fff"></div>
<svg class="abs" style="left:160.2px;top:191.2px" width="10.6" height="9.8" viewBox="0 0 10.6 9.8"><path d="M0.6,0.6 L10,9.2 M10,0.6 L0.6,9.2" stroke="#bdbdbd" stroke-width="1.4"/></svg>
<svg class="abs" style="left:192.3px;top:189.4px" width="12.9" height="11.6" viewBox="0 0 12.9 11.6"><path d="M0.8,7 L4.4,10.6 L12.2,0.8" fill="none" stroke="#cfcfcf" stroke-width="1.9"/></svg>
<span class="t" style="left:226.6px;top:187.2px;font-family:'Liberation Serif',serif;font-style:italic;font-size:15.5px;color:#555;transform:scaleX(.82);letter-spacing:-.5px">f<span style="font-size:10.5px;font-weight:bold">x</span></span>
<div class="abs" style="left:252.4px;top:182.2px;width:1008.6px;height:46.6px;border:1px solid #c6c6c6;background:#fff"></div>
<svg class="abs" style="left:1268px;top:191.4px" width="8" height="5.2" viewBox="0 0 8 5.2"><path d="M0.8,4.6 L4,1.2 L7.2,4.6" fill="none" stroke="#666" stroke-width="1.4"/></svg>
<div class="grid">
<div class="ch" style="left:23.5px;width:58.54px">R</div>
<div class="ch" style="left:71.5px;width:85.98px">S</div>
<div class="ch" style="left:142px;width:84.63px">T</div>
<div class="ch" style="left:211.4px;width:75.73px">U</div>
<div class="ch" style="left:273.5px;width:76.22px">V</div>
<div class="ch" style="left:336px;width:73.78px">W</div>
<div class="ch" style="left:396.5px;width:84.15px">X</div>
<div class="ch" style="left:465.5px;width:86.34px">Y</div>
<div class="ch" style="left:536.3px;width:86.83px">Z</div>
<div class="ch" style="left:607.5px;width:87.56px">AA</div>
<div class="ch" style="left:679.3px;width:87.8px">AB</div>
<div class="ch" style="left:751.3px;width:92.56px">AC</div>
<div class="ch" style="left:827.2px;width:87.56px">AD</div>
<div class="ch" style="left:899px;width:87.2px">AE</div>
<div class="ch" style="left:970.5px;width:83.54px">AF</div>
<div class="ch" style="left:1039px;width:79.88px">AG</div>
<div class="ch" style="left:1104.5px;width:70.85px">AH</div>
<div class="ch" style="left:1162.6px;width:83.41px">AI</div>
<div class="chl" style="left:23px"></div>
<div class="chl" style="left:71px"></div>
<div class="chl" style="left:141.5px"></div>
<div class="chl" style="left:210.9px"></div>
<div class="chl" style="left:273px"></div>
<div class="chl" style="left:335.5px"></div>
<div class="chl" style="left:396px"></div>
<div class="chl" style="left:465px"></div>
<div class="chl" style="left:535.8px"></div>
<div class="chl" style="left:607px"></div>
<div class="chl" style="left:678.8px"></div>
<div class="chl" style="left:750.8px"></div>
<div class="chl" style="left:826.7px"></div>
<div class="chl" style="left:898.5px"></div>
<div class="chl" style="left:970px"></div>
<div class="chl" style="left:1038.5px"></div>
<div class="chl" style="left:1104px"></div>
<div class="chl" style="left:1162.1px"></div>
<div class="chl" style="left:1230.5px"></div>
<div class="hl2" style="top:16.7px"></div>
<div class="rn" style="top:20.61px">1</div>
<div class="rn" style="top:38.37px">2</div>
<div class="rn" style="top:56.14px">3</div>
<div class="rn" style="top:73.9px">4</div>
<div class="rn" style="top:91.66px">5</div>
<div class="rn" style="top:109.42px">6</div>
<div class="rn" style="top:127.19px">7</div>
<div class="rn" style="top:144.95px">8</div>
<div class="rn" style="top:162.71px">9</div>
<div class="rn" style="top:180.47px">10</div>
<div class="rn" style="top:198.24px">11</div>
<div class="rn" style="top:216px">12</div>
<div class="rn" style="top:233.76px">13</div>
<div class="rn" style="top:251.52px">14</div>
<div class="rn" style="top:269.29px">15</div>
<div class="rnsel" style="top:284.91px;height:17.76px"></div>
<div class="rn sel" style="top:287.05px">16</div>
<div class="rn" style="top:304.81px">17</div>
<div class="rn" style="top:322.57px">18</div>
<div class="rn" style="top:340.34px">19</div>
<div class="rn" style="top:358.1px">20</div>
<div class="rn" style="top:375.86px">21</div>
<div class="rn" style="top:393.62px">22</div>
<div class="rn" style="top:411.39px">23</div>
<div class="rn" style="top:429.15px">24</div>
<div class="rn" style="top:446.91px">25</div>
<div class="rn" style="top:464.67px">26</div>
<div class="rn" style="top:482.44px">27</div>
<div class="hl" style="top:53.5px"></div>
<div class="hl" style="top:71.26px"></div>
<div class="hl" style="top:89.03px"></div>
<div class="hl" style="top:106.79px"></div>
<div class="hl" style="top:124.55px"></div>
<div class="hl" style="top:142.31px"></div>
<div class="hl" style="top:160.08px"></div>
<div class="hl" style="top:177.84px"></div>
<div class="hl" style="top:195.6px"></div>
<div class="hl" style="top:213.37px"></div>
<div class="hl" style="top:231.13px"></div>
<div class="hl" style="top:248.89px"></div>
<div class="hl" style="top:266.65px"></div>
<div class="hl" style="top:284.41px"></div>
<div class="hl" style="top:302.18px"></div>
<div class="hl" style="top:319.94px"></div>
<div class="hl" style="top:337.7px"></div>
<div class="hl" style="top:355.46px"></div>
<div class="hl" style="top:373.23px"></div>
<div class="hl" style="top:390.99px"></div>
<div class="hl" style="top:408.75px"></div>
<div class="hl" style="top:426.51px"></div>
<div class="hl" style="top:444.28px"></div>
<div class="hl" style="top:462.04px"></div>
<div class="hl" style="top:479.8px"></div>
<div class="hl" style="top:497.57px"></div>
<div class="vl" style="left:23px"></div>
<div class="vl" style="left:71px"></div>
<div class="vl" style="left:141.5px"></div>
<div class="vl" style="left:210.9px"></div>
<div class="vl" style="left:273px"></div>
<div class="vl" style="left:335.5px"></div>
<div class="vl" style="left:396px"></div>
<div class="vl" style="left:465px"></div>
<div class="vl" style="left:535.8px"></div>
<div class="vl" style="left:607px"></div>
<div class="vl" style="left:678.8px"></div>
<div class="vl" style="left:750.8px"></div>
<div class="vl" style="left:826.7px"></div>
<div class="vl" style="left:898.5px"></div>
<div class="vl" style="left:970px"></div>
<div class="vl" style="left:1038.5px"></div>
<div class="vl" style="left:1104px"></div>
<div class="vl" style="left:1162.1px"></div>
<div class="vl" style="left:1230.5px"></div>
<div class="vl" style="left:22.8px;width:1.3px;background:#a8a8a8"></div>
<div class="hb" style="left:24px;width:47px"></div>
<div class="hc" style="left:26.1px;width:38.61px">born</div>
<div class="fb" style="left:55.9px"><i></i></div>
<div class="hb" style="left:72px;width:69.5px"></div>
<div class="hc" style="left:74.1px;width:67.09px">buspow</div>
<div class="fb" style="left:126.4px"><i></i></div>
<div class="hb" style="left:142.5px;width:68.4px"></div>
<div class="hc" style="left:144.6px;width:65.7px">children</div>
<div class="fb" style="left:195.8px"><i></i></div>
<div class="hb" style="left:211.9px;width:61.1px"></div>
<div class="hc" style="left:214px;width:56.46px">childs</div>
<div class="fb" style="left:257.9px"><i></i></div>
<div class="hb" style="left:274px;width:61.5px"></div>
<div class="hc" style="left:276.1px;width:56.96px">chldhrt</div>
<div class="fb" style="left:320.4px"><i></i></div>
<div class="hb" style="left:336.5px;width:59.5px"></div>
<div class="hc" style="left:338.6px;width:54.43px">citizen</div>
<div class="fb" style="left:380.9px"><i></i></div>
<div class="hb" style="left:397px;width:68px"></div>
<div class="hc" style="left:399.1px;width:65.19px">class</div>
<div class="fb" style="left:449.9px"><i></i></div>
<div class="hb" style="left:466px;width:69.8px"></div>
<div class="hc" style="left:468.1px;width:67.47px">conbus</div>
<div class="fb" style="left:520.7px"><i></i></div>
<div class="hb" style="left:536.8px;width:70.2px"></div>
<div class="hc" style="left:538.9px;width:67.97px">coneduc</div>
<div class="fb" style="left:591.9px"><i></i></div>
<div class="hb" style="left:608px;width:70.8px"></div>
<div class="hc" style="left:610.1px;width:68.73px">confinan</div>
<div class="fb" style="left:663.7px"><i></i></div>
<div class="hb" style="left:679.8px;width:71px"></div>
<div class="hc" style="left:681.9px;width:68.99px">contentd</div>
<div class="fb" style="left:735.7px"><i></i></div>
<div class="hb" style="left:751.8px;width:74.9px"></div>
<div class="hc" style="left:753.9px;width:73.92px">databank</div>
<div class="fb" style="left:811.6px"><i></i></div>
<div class="hb" style="left:827.7px;width:70.8px"></div>
<div class="hc" style="left:829.8px;width:68.73px">degree</div>
<div class="fb" style="left:883.4px"><i></i></div>
<div class="hb" style="left:899.5px;width:70.5px"></div>
<div class="hc" style="left:901.6px;width:68.35px">discaffm</div>
<div class="fb" style="left:954.9px"><i></i></div>
<div class="hb" style="left:971px;width:67.5px"></div>
<div class="hc" style="left:973.1px;width:64.56px">discaffw</div>
<div class="fb" style="left:1023.4px"><i></i></div>
<div class="hb" style="left:1039.5px;width:64.5px"></div>
<div class="hc" style="left:1041.6px;width:60.76px">divorce</div>
<div class="fb" style="left:1088.9px"><i></i></div>
<div class="hb" style="left:1105px;width:57.1px"></div>
<div class="hc" style="left:1107.1px;width:51.39px">earnrs</div>
<div class="fb" style="left:1147px"><i></i></div>
<div class="hb" style="left:1163.1px;width:67.4px"></div>
<div class="hc" style="left:1165.2px;width:64.43px">econsys</div>
<div class="fb" style="left:1215.4px"><i></i></div>
<div class="hb" style="left:1231.5px;width:13px"></div>
<div class="hc" style="left:1233.6px;width:13.92px">educ</div>
<div class="c" style="left:26.3px;top:38.37px;width:54.39px">YES</div>
<div class="c" style="left:144.8px;top:38.37px;width:80.49px">Improved</div>
<div class="c n" style="left:211.4px;top:38.37px;width:73.78px">2</div>
<div class="c" style="left:399.3px;top:38.37px;width:80px">WORKING</div>
<div class="c" style="left:468.3px;top:38.37px;width:82.2px">ONLY SOM</div>
<div class="c" style="left:539.1px;top:38.37px;width:82.68px">A GREAT</div>
<div class="c" style="left:610.3px;top:38.37px;width:83.41px">HARDLY A</div>
<div class="c n" style="left:679.3px;top:38.37px;width:85.85px">5</div>
<div class="c" style="left:830px;top:38.37px;width:83.41px">LT HIGH</div>
<div class="c" style="left:973.3px;top:38.37px;width:79.39px">Very unl</div>
<div class="c n" style="left:1104.5px;top:38.37px;width:68.9px">2</div>
<div class="c" style="left:26.3px;top:56.14px;width:54.39px">YES</div>
<div class="c" style="left:74.3px;top:56.14px;width:81.83px">FAR TOO</div>
<div class="c" style="left:468.3px;top:56.14px;width:82.2px">ONLY SOM</div>
<div class="c" style="left:539.1px;top:56.14px;width:82.68px">A GREAT</div>
<div class="c" style="left:610.3px;top:56.14px;width:83.41px">A GREAT</div>
<div class="c" style="left:754.1px;top:56.14px;width:88.41px">VERY SER</div>
<div class="c" style="left:830px;top:56.14px;width:83.41px">LT HIGH</div>
<div class="c n" style="left:1104.5px;top:56.14px;width:68.9px">5</div>
<div class="c" style="left:1165.4px;top:56.14px;width:79.27px">ok but n</div>
<div class="c" style="left:26.3px;top:73.9px;width:54.39px">YES</div>
<div class="c" style="left:144.8px;top:73.9px;width:80.49px">Made the</div>
<div class="c" style="left:468.3px;top:73.9px;width:82.2px">HARDLY A</div>
<div class="c" style="left:539.1px;top:73.9px;width:82.68px">ONLY SOM</div>
<div class="c" style="left:610.3px;top:73.9px;width:83.41px">A GREAT</div>
<div class="c" style="left:830px;top:73.9px;width:83.41px">LT HIGH</div>
<div class="c" style="left:973.3px;top:73.9px;width:79.39px">Very lik</div>
<div class="c n" style="left:1104.5px;top:73.9px;width:68.9px">1</div>
<div class="c" style="left:26.3px;top:91.66px;width:54.39px">NO</div>
<div class="c" style="left:144.8px;top:91.66px;width:80.49px">Improved</div>
<div class="c n" style="left:679.3px;top:91.66px;width:85.85px">7</div>
<div class="c" style="left:830px;top:91.66px;width:83.41px">LT HIGH</div>
<div class="c" style="left:973.3px;top:91.66px;width:79.39px">Somewhat</div>
<div class="c n" style="left:1104.5px;top:91.66px;width:68.9px">2</div>
<div class="c" style="left:26.3px;top:109.42px;width:54.39px">YES</div>
<div class="c" style="left:74.3px;top:109.42px;width:81.83px">RIGHT AM</div>
<div class="c" style="left:468.3px;top:109.42px;width:82.2px">ONLY SOM</div>
<div class="c" style="left:539.1px;top:109.42px;width:82.68px">ONLY SOM</div>
<div class="c" style="left:610.3px;top:109.42px;width:83.41px">ONLY SOM</div>
<div class="c" style="left:754.1px;top:109.42px;width:88.41px">VERY SER</div>
<div class="c" style="left:830px;top:109.42px;width:83.41px">LT HIGH</div>
<div class="c n" style="left:1104.5px;top:109.42px;width:68.9px">6</div>
<div class="c" style="left:1165.4px;top:109.42px;width:79.27px">need fun</div>
<div class="c" style="left:26.3px;top:127.19px;width:54.39px">YES</div>
<div class="c" style="left:74.3px;top:127.19px;width:81.83px">TOO MUCH</div>
<div class="c" style="left:468.3px;top:127.19px;width:82.2px">A GREAT</div>
<div class="c" style="left:539.1px;top:127.19px;width:82.68px">A GREAT</div>
<div class="c" style="left:610.3px;top:127.19px;width:83.41px">ONLY SOM</div>
<div class="c" style="left:754.1px;top:127.19px;width:88.41px">NOT SERI</div>
<div class="c" style="left:830px;top:127.19px;width:83.41px">LT HIGH</div>
<div class="c n" style="left:1104.5px;top:127.19px;width:68.9px">0</div>
<div class="c" style="left:1165.4px;top:127.19px;width:79.27px">need fun</div>
<div class="c" style="left:26.3px;top:144.95px;width:54.39px">YES</div>
<div class="c" style="left:74.3px;top:144.95px;width:81.83px">TOO LITT</div>
<div class="c" style="left:754.1px;top:144.95px;width:88.41px">NOT SERI</div>
<div class="c" style="left:830px;top:144.95px;width:83.41px">LT HIGH</div>
<div class="c n" style="left:1104.5px;top:144.95px;width:68.9px">1</div>
<div class="c" style="left:1165.4px;top:144.95px;width:79.27px">need fun</div>
<div class="c" style="left:26.3px;top:162.71px;width:54.39px">YES</div>
<div class="c" style="left:74.3px;top:162.71px;width:81.83px">TOO MUCH</div>
<div class="c" style="left:610.3px;top:162.71px;width:83.41px">A GREAT</div>
<div class="c" style="left:754.1px;top:162.71px;width:88.41px">FAIRLY S</div>
<div class="c" style="left:830px;top:162.71px;width:83.41px">LT HIGH</div>
<div class="c n" style="left:1104.5px;top:162.71px;width:68.9px">4</div>
<div class="c" style="left:1165.4px;top:162.71px;width:79.27px">need to</div>
<div class="c" style="left:26.3px;top:180.47px;width:54.39px">YES</div>
<div class="c" style="left:144.8px;top:180.47px;width:80.49px">Improved</div>
<div class="c" style="left:610.3px;top:180.47px;width:83.41px">HARDLY A</div>
<div class="c n" style="left:679.3px;top:180.47px;width:85.85px">2</div>
<div class="c" style="left:830px;top:180.47px;width:83.41px">LT HIGH</div>
<div class="c" style="left:901.8px;top:180.47px;width:83.05px">Very unl</div>
<div class="c n" style="left:1104.5px;top:180.47px;width:68.9px">2</div>
<div class="c" style="left:26.3px;top:198.24px;width:54.39px">YES</div>
<div class="c" style="left:610.3px;top:198.24px;width:83.41px">ONLY SOM</div>
<div class="c n" style="left:679.3px;top:198.24px;width:85.85px">6</div>
<div class="c" style="left:830px;top:198.24px;width:83.41px">HIGH SCH</div>
<div class="c n" style="left:1104.5px;top:198.24px;width:68.9px">3</div>
<div class="c" style="left:26.3px;top:216px;width:54.39px">YES</div>
<div class="c" style="left:144.8px;top:216px;width:80.49px">Had no e</div>
<div class="c n" style="left:679.3px;top:216px;width:85.85px">7</div>
<div class="c" style="left:830px;top:216px;width:83.41px">LT HIGH</div>
<div class="c" style="left:973.3px;top:216px;width:79.39px">Somewhat</div>
<div class="c n" style="left:1104.5px;top:216px;width:68.9px">0</div>
<div class="c" style="left:26.3px;top:233.76px;width:54.39px">NO</div>
<div class="c" style="left:144.8px;top:233.76px;width:80.49px">Improved</div>
<div class="c n" style="left:679.3px;top:233.76px;width:85.85px">4</div>
<div class="c" style="left:830px;top:233.76px;width:83.41px">HIGH SCH</div>
<div class="c" style="left:973.3px;top:233.76px;width:79.39px">Somewhat</div>
<div class="c n" style="left:1104.5px;top:233.76px;width:68.9px">4</div>
<div class="c" style="left:26.3px;top:251.52px;width:54.39px">YES</div>
<div class="c" style="left:74.3px;top:251.52px;width:81.83px">FAR TOO</div>
<div class="c" style="left:610.3px;top:251.52px;width:83.41px">HARDLY A</div>
<div class="c" style="left:754.1px;top:251.52px;width:88.41px">FAIRLY S</div>
<div class="c" style="left:830px;top:251.52px;width:83.41px">HIGH SCH</div>
<div class="c n" style="left:1104.5px;top:251.52px;width:68.9px">4</div>
<div class="c" style="left:1165.4px;top:251.52px;width:79.27px">need fun</div>
<div class="c" style="left:26.3px;top:269.29px;width:54.39px">YES</div>
<div class="c" style="left:754.1px;top:269.29px;width:88.41px">FAIRLY S</div>
<div class="c" style="left:830px;top:269.29px;width:83.41px">HIGH SCH</div>
<div class="c n" style="left:1104.5px;top:269.29px;width:68.9px">2</div>
<div class="c" style="left:1165.4px;top:269.29px;width:79.27px">need fun</div>
<div class="c" style="left:26.3px;top:287.05px;width:54.39px">YES</div>
<div class="c" style="left:144.8px;top:287.05px;width:80.49px">Improved</div>
<div class="c" style="left:610.3px;top:287.05px;width:83.41px">ONLY SOM</div>
<div class="c n" style="left:679.3px;top:287.05px;width:85.85px">1</div>
<div class="c" style="left:830px;top:287.05px;width:83.41px">HIGH SCH</div>
<div class="c" style="left:973.3px;top:287.05px;width:79.39px">Somewhat</div>
<div class="c n" style="left:1104.5px;top:287.05px;width:68.9px">2</div>
<div class="c" style="left:26.3px;top:304.81px;width:54.39px">YES</div>
<div class="c" style="left:144.8px;top:304.81px;width:80.49px">Had no e</div>
<div class="c n" style="left:679.3px;top:304.81px;width:85.85px">3</div>
<div class="c" style="left:830px;top:304.81px;width:83.41px">HIGH SCH</div>
<div class="c" style="left:901.8px;top:304.81px;width:83.05px">Somewhat</div>
<div class="c n" style="left:1104.5px;top:304.81px;width:68.9px">3</div>
<div class="c" style="left:26.3px;top:322.57px;width:54.39px">NO</div>
<div class="c" style="left:74.3px;top:322.57px;width:81.83px">TOO MUCH</div>
<div class="c" style="left:610.3px;top:322.57px;width:83.41px">A GREAT</div>
<div class="c" style="left:754.1px;top:322.57px;width:88.41px">FAIRLY S</div>
<div class="c" style="left:830px;top:322.57px;width:83.41px">LT HIGH</div>
<div class="c" style="left:1041.8px;top:322.57px;width:75.73px">NO</div>
<div class="c n" style="left:1104.5px;top:322.57px;width:68.9px">2</div>
<div class="c" style="left:1165.4px;top:322.57px;width:79.27px">need fun</div>
<div class="c" style="left:26.3px;top:340.34px;width:54.39px">YES</div>
<div class="c" style="left:74.3px;top:340.34px;width:81.83px">RIGHT AM</div>
<div class="c" style="left:468.3px;top:340.34px;width:82.2px">ONLY SOM</div>
<div class="c" style="left:539.1px;top:340.34px;width:82.68px">ONLY SOM</div>
<div class="c" style="left:610.3px;top:340.34px;width:83.41px">HARDLY A</div>
<div class="c" style="left:754.1px;top:340.34px;width:88.41px">VERY SER</div>
<div class="c" style="left:830px;top:340.34px;width:83.41px">LT HIGH</div>
<div class="c" style="left:1165.4px;top:340.34px;width:79.27px">need fun</div>
<div class="c" style="left:26.3px;top:358.1px;width:54.39px">YES</div>
<div class="c" style="left:144.8px;top:358.1px;width:80.49px">Had no e</div>
<div class="c" style="left:468.3px;top:358.1px;width:82.2px">ONLY SOM</div>
<div class="c" style="left:539.1px;top:358.1px;width:82.68px">ONLY SOM</div>
<div class="c" style="left:610.3px;top:358.1px;width:83.41px">ONLY SOM</div>
<div class="c n" style="left:679.3px;top:358.1px;width:85.85px">3</div>
<div class="c" style="left:830px;top:358.1px;width:83.41px">HIGH SCH</div>
<div class="c" style="left:901.8px;top:358.1px;width:83.05px">Somewhat</div>
<div class="c n" style="left:1104.5px;top:358.1px;width:68.9px">2</div>
<div class="c" style="left:26.3px;top:375.86px;width:54.39px">NO</div>
<div class="c" style="left:74.3px;top:375.86px;width:81.83px">RIGHT AM</div>
<div class="c" style="left:468.3px;top:375.86px;width:82.2px">A GREAT</div>
<div class="c" style="left:539.1px;top:375.86px;width:82.68px">ONLY SOM</div>
<div class="c" style="left:610.3px;top:375.86px;width:83.41px">ONLY SOM</div>
<div class="c" style="left:830px;top:375.86px;width:83.41px">HIGH SCH</div>
<div class="c n" style="left:1104.5px;top:375.86px;width:68.9px">2</div>
<div class="c" style="left:1165.4px;top:375.86px;width:79.27px">need fun</div>
<div class="c" style="left:26.3px;top:393.62px;width:54.39px">YES</div>
<div class="c" style="left:144.8px;top:393.62px;width:80.49px">Made the</div>
<div class="c" style="left:468.3px;top:393.62px;width:82.2px">A GREAT</div>
<div class="c" style="left:539.1px;top:393.62px;width:82.68px">ONLY SOM</div>
<div class="c" style="left:610.3px;top:393.62px;width:83.41px">A GREAT</div>
<div class="c n" style="left:679.3px;top:393.62px;width:85.85px">6</div>
<div class="c" style="left:830px;top:393.62px;width:83.41px">HIGH SCH</div>
<div class="c" style="left:901.8px;top:393.62px;width:83.05px">Very unl</div>
<div class="c n" style="left:1104.5px;top:393.62px;width:68.9px">4</div>
<div class="c" style="left:26.3px;top:411.39px;width:54.39px">YES</div>
<div class="c" style="left:74.3px;top:411.39px;width:81.83px">RIGHT AM</div>
<div class="c" style="left:468.3px;top:411.39px;width:82.2px">A GREAT</div>
<div class="c" style="left:539.1px;top:411.39px;width:82.68px">A GREAT</div>
<div class="c" style="left:610.3px;top:411.39px;width:83.41px">HARDLY A</div>
<div class="c" style="left:754.1px;top:411.39px;width:88.41px">NOT SERI</div>
<div class="c" style="left:830px;top:411.39px;width:83.41px">LT HIGH</div>
<div class="c n" style="left:1104.5px;top:411.39px;width:68.9px">3</div>
<div class="c" style="left:1165.4px;top:411.39px;width:79.27px">need to</div>
<div class="c" style="left:26.3px;top:429.15px;width:54.39px">YES</div>
<div class="c" style="left:74.3px;top:429.15px;width:81.83px">RIGHT AM</div>
<div class="c" style="left:754.1px;top:429.15px;width:88.41px">VERY SER</div>
<div class="c" style="left:830px;top:429.15px;width:83.41px">HIGH SCH</div>
<div class="c n" style="left:1104.5px;top:429.15px;width:68.9px">3</div>
<div class="c" style="left:1165.4px;top:429.15px;width:79.27px">need to</div>
<div class="c" style="left:26.3px;top:446.91px;width:54.39px">YES</div>
<div class="c" style="left:74.3px;top:446.91px;width:81.83px">TOO LITT</div>
<div class="c n" style="left:211.4px;top:446.91px;width:73.78px">0</div>
<div class="c" style="left:399.3px;top:446.91px;width:80px">WORKING</div>
<div class="c" style="left:754.1px;top:446.91px;width:88.41px">VERY SER</div>
<div class="c" style="left:830px;top:446.91px;width:83.41px">LT HIGH</div>
<div class="c n" style="left:1104.5px;top:446.91px;width:68.9px">1</div>
<div class="c" style="left:1165.4px;top:446.91px;width:79.27px">need fun</div>
<div class="c" style="left:26.3px;top:464.67px;width:54.39px">YES</div>
<div class="c" style="left:144.8px;top:464.67px;width:80.49px">Improved</div>
<div class="c n" style="left:211.4px;top:464.67px;width:73.78px">1</div>
<div class="c" style="left:276.3px;top:464.67px;width:72.07px">No</div>
<div class="c" style="left:338.8px;top:464.67px;width:69.63px">Yes</div>
<div class="c" style="left:399.3px;top:464.67px;width:80px">LOWER CL</div>
<div class="c" style="left:468.3px;top:464.67px;width:82.2px">ONLY SOM</div>
<div class="c" style="left:539.1px;top:464.67px;width:82.68px">ONLY SOM</div>
<div class="c" style="left:610.3px;top:464.67px;width:83.41px">ONLY SOM</div>
<div class="c n" style="left:679.3px;top:464.67px;width:85.85px">7</div>
<div class="c" style="left:830px;top:464.67px;width:83.41px">HIGH SCH</div>
<div class="c" style="left:973.3px;top:464.67px;width:79.39px">Very lik</div>
<div class="c n" style="left:1104.5px;top:464.67px;width:68.9px">1</div>
<div class="c" style="left:26.3px;top:482.44px;width:54.39px">YES</div>
<div class="c" style="left:74.3px;top:482.44px;width:81.83px">RIGHT AM</div>
<div class="c n" style="left:211.4px;top:482.44px;width:73.78px">0</div>
<div class="c" style="left:399.3px;top:482.44px;width:80px">MIDDLE C</div>
<div class="c" style="left:754.1px;top:482.44px;width:88.41px">NOT A TH</div>
<div class="c" style="left:830px;top:482.44px;width:83.41px">LT HIGH</div>
<div class="c n" style="left:1104.5px;top:482.44px;width:68.9px">3</div>
<div class="c" style="left:1165.4px;top:482.44px;width:79.27px">ok but n</div>
</div>
<svg class="abs" style="left:33.3px;top:245.5px" width="8" height="7.9" viewBox="0 0 8 8"><polygon points="8,0 8,8 0,8" fill="#dcdcdc"/></svg>
<div class="abs" style="left:1265.5px;top:240px;width:19.5px;height:491px;background:#fff"></div>
<div class="abs" style="left:1268.4px;top:242px;width:13.4px;height:488px;background:#ececec"></div>
<div class="abs" style="left:1268.4px;top:242px;width:13.4px;height:15.4px;background:#fff;border:1px solid #ababab"></div>
<svg class="abs" style="left:1271.8px;top:247.6px" width="6.6" height="3.8" viewBox="0 0 6.6 3.8"><polygon points="0,3.8 6.6,3.8 3.3,0" fill="#666"/></svg>
<div class="abs" style="left:1268.4px;top:257.4px;width:13.4px;height:17.8px;background:#fff;border:1px solid #ababab;border-top:none"></div>
<div class="abs" style="left:1268.4px;top:714.6px;width:13.4px;height:15.4px;background:#fff;border:1px solid #ababab"></div>
<svg class="abs" style="left:1271.8px;top:720.6px" width="6.6" height="3.8" viewBox="0 0 6.6 3.8"><polygon points="0,0 6.6,0 3.3,3.8" fill="#666"/></svg>
<div class="abs" style="left:1264.6px;top:240px;width:1px;height:491px;background:#c0c0c0"></div>
<div class="abs" style="left:21px;top:730.4px;width:1264px;height:29.6px;background:#f3f3f3;border-top:1px solid #bdbdbd"></div>
<svg class="abs" style="left:45.8px;top:740.6px" width="4.6" height="7.8" viewBox="0 0 4.6 7.8"><polygon points="4.6,0 4.6,7.8 0,3.9" fill="#c4c4c4"/></svg>
<svg class="abs" style="left:72px;top:740.6px" width="4.6" height="7.8" viewBox="0 0 4.6 7.8"><polygon points="0,0 0,7.8 4.6,3.9" fill="#c4c4c4"/></svg>
<div class="abs" style="left:113.6px;top:730px;width:60.8px;height:26px;background:#fff;border-bottom:2px solid #217346;border-left:1px solid #bdbdbd;border-right:1px solid #bdbdbd"></div>
<span class="t" style="left:124.2px;top:737.66px;font-size:13.4px;transform:scaleX(0.869);color:#217346;font-weight:bold">Sheet1</span>
<span class="t" style="left:185.3px;top:737.66px;font-size:13.4px;transform:scaleX(0.852);color:#555">Sheet2</span>
<span class="t" style="left:245.6px;top:737.66px;font-size:13.4px;transform:scaleX(0.841);color:#555">Sheet3</span>
<div class="abs" style="left:233.8px;top:734.5px;width:1px;height:20.5px;background:#ababab"></div>
<div class="abs" style="left:292.9px;top:734.5px;width:1px;height:20.5px;background:#ababab"></div>
<svg class="abs" style="left:324.3px;top:737.9px" width="14" height="14" viewBox="0 0 14 14"><circle cx="7" cy="7" r="6.2" fill="none" stroke="#777" stroke-width="1.1"/><path d="M3.6,7 h6.8 M7,3.6 v6.8" stroke="#666" stroke-width="1.4"/></svg>
<div class="abs" style="left:779px;top:739.6px;width:1.7px;height:1.8px;background:#9a9a9a"></div>
<div class="abs" style="left:779px;top:744.3px;width:1.7px;height:1.8px;background:#9a9a9a"></div>
<div class="abs" style="left:779px;top:749.1px;width:1.7px;height:1.8px;background:#9a9a9a"></div>
<div class="abs" style="left:794.5px;top:737.8px;width:468px;height:15.4px;background:#e8e8e8"></div>
<div class="abs" style="left:794.5px;top:737.8px;width:14.2px;height:15.4px;background:#fff;border:1px solid #ababab"></div>
<svg class="abs" style="left:799.6px;top:741.8px" width="4" height="7.4" viewBox="0 0 4 7.4"><polygon points="4,0 4,7.4 0,3.7" fill="#555"/></svg>
<div class="abs" style="left:859.4px;top:737.8px;width:49.5px;height:15.4px;background:#fff;border:1px solid #ababab"></div>
<div class="abs" style="left:1249.4px;top:737.8px;width:13.1px;height:15.4px;background:#fff;border:1px solid #ababab"></div>
<svg class="abs" style="left:1254.4px;top:741.8px" width="4" height="7.4" viewBox="0 0 4 7.4"><polygon points="0,0 0,7.4 4,3.7" fill="#555"/></svg>
<div class="abs" style="left:21px;top:759.8px;width:1264px;height:19.2px;background:#217346"></div>
<span class="t" style="left:28px;top:765.61px;font-size:11.8px;transform:scaleX(0.735);color:#fff">READY</span>
<div class="abs" style="left:1015.3px;top:759.8px;width:34.3px;height:19.2px;background:#185c37"></div>
<svg class="abs" style="left:1026.2px;top:763.9px" width="11.6" height="13" viewBox="0 0 11.6 13"><rect x="0.6" y="0.6" width="10.4" height="11.8" fill="none" stroke="#fff" stroke-width="1.2"/><path d="M4.1,0.6 v11.8 M7.6,0.6 v11.8 M0.6,4.5 h10.4 M0.6,8.5 h10.4" stroke="#fff" stroke-width="1.1"/></svg>
<svg class="abs" style="left:1061.2px;top:763.7px" width="12.6" height="13.8" viewBox="0 0 12.6 13.8"><rect x="0.6" y="0.6" width="11.4" height="12.6" fill="none" stroke="#fff" stroke-width="1.1"/><rect x="3.4" y="3.4" width="5.8" height="7.4" fill="none" stroke="#fff" stroke-width="1"/><path d="M5,5.6 h2.6 M5,7.2 h2.6 M5,8.8 h2.6" stroke="#fff" stroke-width="0.8"/></svg>
<svg class="abs" style="left:1095.9px;top:763.7px" width="13.2" height="13.8" viewBox="0 0 13.2 13.8"><rect x="0.6" y="0.6" width="12" height="12.6" fill="none" stroke="#fff" stroke-width="1.1"/><rect x="3.6" y="0.6" width="3" height="7" fill="#fff"/><rect x="8" y="0.6" width="4.4" height="7" fill="#fff"/><rect x="0.6" y="7.6" width="3" height="5.4" fill="none"/></svg>
<div class="abs" style="left:1124.9px;top:770px;width:5.7px;height:2px;background:#fff"></div>
<div class="abs" style="left:1134.1px;top:770px;width:92.2px;height:1.2px;background:#fff"></div>
<div class="abs" style="left:1178.2px;top:764.7px;width:4px;height:11.3px;background:#fff"></div>
<div class="abs" style="left:1230.2px;top:769.9px;width:7.4px;height:2px;background:#fff"></div>
<div class="abs" style="left:1232.9px;top:767.2px;width:2px;height:7.4px;background:#fff"></div>
<span class="t" style="left:1252.7px;top:765.81px;font-size:11.8px;transform:scaleX(0.802);color:#fff">100%</span>
<div class="abs" style="left:238.5px;top:275.6px;width:248.5px;height:416px;background:#fff;border:1px solid #c9c9c9;box-shadow:2px 2px 4px rgba(0,0,0,.28)"></div>
<div class="abs" style="left:239.5px;top:404.8px;width:246.5px;height:24.9px;background:#cde8d8"></div>
<svg class="abs" style="left:244.2px;top:281.2px" width="13.6" height="16" viewBox="0 0 13.6 16"><text x="0" y="7.6" font-family="Liberation Sans, sans-serif" font-size="10.6" fill="#2e74b5" stroke="#2e74b5" stroke-width="0.35" textLength="6" lengthAdjust="spacingAndGlyphs">A</text>
<text x="0" y="15.7" font-family="Liberation Sans, sans-serif" font-size="10.6" fill="#8e44ad" stroke="#8e44ad" stroke-width="0.35" textLength="6" lengthAdjust="spacingAndGlyphs">Z</text>
<path d="M10.4,0.6 V14.6 M7.6,11.4 L10.4,14.8 L13.2,11.4" fill="none" stroke="#444" stroke-width="1.2"/></svg>
<svg class="abs" style="left:244.2px;top:306px" width="13.6" height="16" viewBox="0 0 13.6 16"><text x="0" y="7.6" font-family="Liberation Sans, sans-serif" font-size="10.6" fill="#8e44ad" stroke="#8e44ad" stroke-width="0.35" textLength="6" lengthAdjust="spacingAndGlyphs">Z</text>
<text x="0" y="15.7" font-family="Liberation Sans, sans-serif" font-size="10.6" fill="#2e74b5" stroke="#2e74b5" stroke-width="0.35" textLength="6" lengthAdjust="spacingAndGlyphs">A</text>
<path d="M10.4,0.6 V14.6 M7.6,11.4 L10.4,14.8 L13.2,11.4" fill="none" stroke="#444" stroke-width="1.2"/></svg>
<span class="t" style="left:268.1px;top:282.69px;font-size:13.6px;transform:scaleX(0.814)"><u>S</u>ort A to Z</span>
<span class="t" style="left:268.1px;top:307.69px;font-size:13.6px;transform:scaleX(0.802)">S<u>o</u>rt Z to A</span>
<span class="t" style="left:268.1px;top:332.39px;font-size:13.6px;transform:scaleX(0.804)">Sor<u>t</u> by Color</span>
<div class="abs" style="left:269px;top:352.1px;width:217px;height:1.1px;background:#e1e1e1"></div>
<svg class="abs" style="left:244px;top:359.6px" width="14.4" height="15.6" viewBox="0 0 14.4 15.6"><path d="M0.3,0.4 H10.2 L6.4,5 V11.6 L4.2,9.8 V5 Z" fill="#b9b9b9"/><path d="M7.6,9.4 L13.6,15 M13.6,9.4 L7.6,15 M5.4,9 v4.2" stroke="#a9a9a9" stroke-width="1.2" fill="none"/></svg>
<span class="t" style="left:268.1px;top:359.59px;font-size:13.6px;transform:scaleX(0.785);color:#a6a6a6"><u>C</u>lear Filter From "class"</span>
<span class="t" style="left:268.1px;top:384.99px;font-size:13.6px;transform:scaleX(0.808);color:#a6a6a6">F<u>i</u>lter by Color</span>
<span class="t" style="left:268.1px;top:409.89px;font-size:13.6px;transform:scaleX(0.782)">Text <u>F</u>ilters</span>
<svg class="abs" style="left:472.8px;top:335.5px" width="4.2" height="8" viewBox="0 0 4.2 8"><polygon points="0,0 0,8 4.2,4" fill="#555"/></svg>
<svg class="abs" style="left:472.8px;top:387.7px" width="4.2" height="8" viewBox="0 0 4.2 8"><polygon points="0,0 0,8 4.2,4" fill="#bbb"/></svg>
<svg class="abs" style="left:472.8px;top:412.6px" width="4.2" height="8" viewBox="0 0 4.2 8"><polygon points="0,0 0,8 4.2,4" fill="#555"/></svg>
<div class="abs" style="left:267px;top:436.3px;width:212.8px;height:21.1px;border:1px solid #ababab;background:#fff"></div>
<span class="t" style="left:269.4px;top:440.23px;font-size:12.6px;transform:scaleX(0.791);color:#777">Search</span>
<svg class="abs" style="left:465.5px;top:439.6px" width="11.5" height="13.4" viewBox="0 0 11.5 13.4"><circle cx="7" cy="4.6" r="3.6" fill="none" stroke="#2e74b5" stroke-width="1.5"/><path d="M4.6,7.4 L0.8,12.4" stroke="#2e74b5" stroke-width="2"/></svg>
<div class="abs" style="left:267px;top:461px;width:212.8px;height:175.8px;border:1px solid #dedee6;background:#fff"></div>
<div class="abs" style="left:279px;top:470px;width:1px;height:84.5px;background:repeating-linear-gradient(#999 0 1px,transparent 1px 2px)"></div>
<div class="abs" style="left:280px;top:469.7px;width:8px;height:1px;background:repeating-linear-gradient(90deg,#999 0 1px,transparent 1px 2px)"></div>
<div class="abs" style="left:288.2px;top:464.8px;width:10.6px;height:10.6px;border:1px solid #555;background:#fff"></div>
<svg class="abs" style="left:289.6px;top:466.4px" width="7.8" height="7.2" viewBox="0 0 7.8 7.2"><path d="M0.8,3.6 L3,6 L7,0.8" fill="none" stroke="#111" stroke-width="1.6"/></svg>
<span class="t" style="left:301.4px;top:465.21px;font-size:11.8px;transform:scaleX(0.851);color:#222">(Select All)</span>
<div class="abs" style="left:280px;top:486.5px;width:8px;height:1px;background:repeating-linear-gradient(90deg,#999 0 1px,transparent 1px 2px)"></div>
<div class="abs" style="left:288.2px;top:481.6px;width:10.6px;height:10.6px;border:1px solid #555;background:#fff"></div>
<svg class="abs" style="left:289.6px;top:483.2px" width="7.8" height="7.2" viewBox="0 0 7.8 7.2"><path d="M0.8,3.6 L3,6 L7,0.8" fill="none" stroke="#111" stroke-width="1.6"/></svg>
<span class="t" style="left:301.4px;top:482.01px;font-size:11.8px;transform:scaleX(0.790);color:#222">LOWER CL</span>
<div class="abs" style="left:280px;top:503.2px;width:8px;height:1px;background:repeating-linear-gradient(90deg,#999 0 1px,transparent 1px 2px)"></div>
<div class="abs" style="left:288.2px;top:498.3px;width:10.6px;height:10.6px;border:1px solid #555;background:#fff"></div>
<svg class="abs" style="left:289.6px;top:499.9px" width="7.8" height="7.2" viewBox="0 0 7.8 7.2"><path d="M0.8,3.6 L3,6 L7,0.8" fill="none" stroke="#111" stroke-width="1.6"/></svg>
<span class="t" style="left:301.4px;top:498.71px;font-size:11.8px;transform:scaleX(0.816);color:#222">MIDDLE C</span>
<div class="abs" style="left:280px;top:520px;width:8px;height:1px;background:repeating-linear-gradient(90deg,#999 0 1px,transparent 1px 2px)"></div>
<div class="abs" style="left:288.2px;top:515.1px;width:10.6px;height:10.6px;border:1px solid #555;background:#fff"></div>
<svg class="abs" style="left:289.6px;top:516.7px" width="7.8" height="7.2" viewBox="0 0 7.8 7.2"><path d="M0.8,3.6 L3,6 L7,0.8" fill="none" stroke="#111" stroke-width="1.6"/></svg>
<span class="t" style="left:301.4px;top:515.51px;font-size:11.8px;transform:scaleX(0.749);color:#222">UPPER CL</span>
<div class="abs" style="left:280px;top:536.7px;width:8px;height:1px;background:repeating-linear-gradient(90deg,#999 0 1px,transparent 1px 2px)"></div>
<div class="abs" style="left:288.2px;top:531.8px;width:10.6px;height:10.6px;border:1px solid #555;background:#fff"></div>
<svg class="abs" style="left:289.6px;top:533.4px" width="7.8" height="7.2" viewBox="0 0 7.8 7.2"><path d="M0.8,3.6 L3,6 L7,0.8" fill="none" stroke="#111" stroke-width="1.6"/></svg>
<span class="t" style="left:301.4px;top:532.21px;font-size:11.8px;transform:scaleX(0.825);color:#222">WORKING</span>
<div class="abs" style="left:280px;top:553.5px;width:8px;height:1px;background:repeating-linear-gradient(90deg,#999 0 1px,transparent 1px 2px)"></div>
<div class="abs" style="left:288.2px;top:548.6px;width:10.6px;height:10.6px;border:1px solid #555;background:#fff"></div>
<svg class="abs" style="left:289.6px;top:550.2px" width="7.8" height="7.2" viewBox="0 0 7.8 7.2"><path d="M0.8,3.6 L3,6 L7,0.8" fill="none" stroke="#111" stroke-width="1.6"/></svg>
<span class="t" style="left:301.4px;top:549.01px;font-size:11.8px;transform:scaleX(0.848);color:#222">(Blanks)</span>
<div class="abs" style="left:333.8px;top:652.9px;width:67.2px;height:21.8px;border:1px solid #adadad;background:linear-gradient(#f0f0f0,#e3e3e3)"></div>
<span class="t" style="left:360.7px;top:658.56px;font-size:12.8px;transform:scaleX(0.773);color:#222">OK</span>
<div class="abs" style="left:411.4px;top:652.9px;width:67.2px;height:21.8px;border:1px solid #adadad;background:linear-gradient(#f0f0f0,#e3e3e3)"></div>
<span class="t" style="left:429.3px;top:658.56px;font-size:12.8px;transform:scaleX(0.778);color:#222">Cancel</span>
<div class="abs" style="left:239.5px;top:680.2px;width:246.5px;height:1px;background:#e4e8ee"></div>
<div class="abs" style="left:482px;top:684.4px;width:1.4px;height:1.4px;background:#999"></div>
<div class="abs" style="left:482px;top:687.6px;width:1.4px;height:1.4px;background:#999"></div>
<div class="abs" style="left:478.8px;top:687.6px;width:1.4px;height:1.4px;background:#999"></div>
<div class="abs" style="left:485.8px;top:404.2px;width:148.4px;height:184.8px;background:#fff;border:1px solid #c9c9c9;box-shadow:2px 2px 4px rgba(0,0,0,.28)"></div>
<div class="abs" style="left:487.2px;top:563.8px;width:145.8px;height:24.2px;background:#cde8d8"></div>
<span class="t" style="left:516.1px;top:412.29px;font-size:13.6px;transform:scaleX(0.745)"><u>E</u>quals...</span>
<span class="t" style="left:516.1px;top:437.79px;font-size:13.6px;transform:scaleX(0.779)">Does <u>N</u>ot Equal...</span>
<span class="t" style="left:516.1px;top:464.29px;font-size:13.6px;transform:scaleX(0.793)">Begins W<u>i</u>th...</span>
<span class="t" style="left:516.1px;top:489.59px;font-size:13.6px;transform:scaleX(0.777)">Ends Wi<u>t</u>h...</span>
<span class="t" style="left:516.1px;top:516.69px;font-size:13.6px;transform:scaleX(0.791)">Cont<u>a</u>ins...</span>
<span class="t" style="left:516.1px;top:541.79px;font-size:13.6px;transform:scaleX(0.800)"><u>D</u>oes Not Contain...</span>
<span class="t" style="left:516.1px;top:569.09px;font-size:13.6px;transform:scaleX(0.804)">Custom <u>F</u>ilter...</span>
<div class="abs" style="left:517px;top:456.9px;width:116px;height:1.1px;background:#e1e1e1"></div>
<div class="abs" style="left:517px;top:508.9px;width:116px;height:1.1px;background:#e1e1e1"></div>
<div class="abs" style="left:517px;top:560.8px;width:116px;height:1.1px;background:#e1e1e1"></div>
</div>
</body></html>
